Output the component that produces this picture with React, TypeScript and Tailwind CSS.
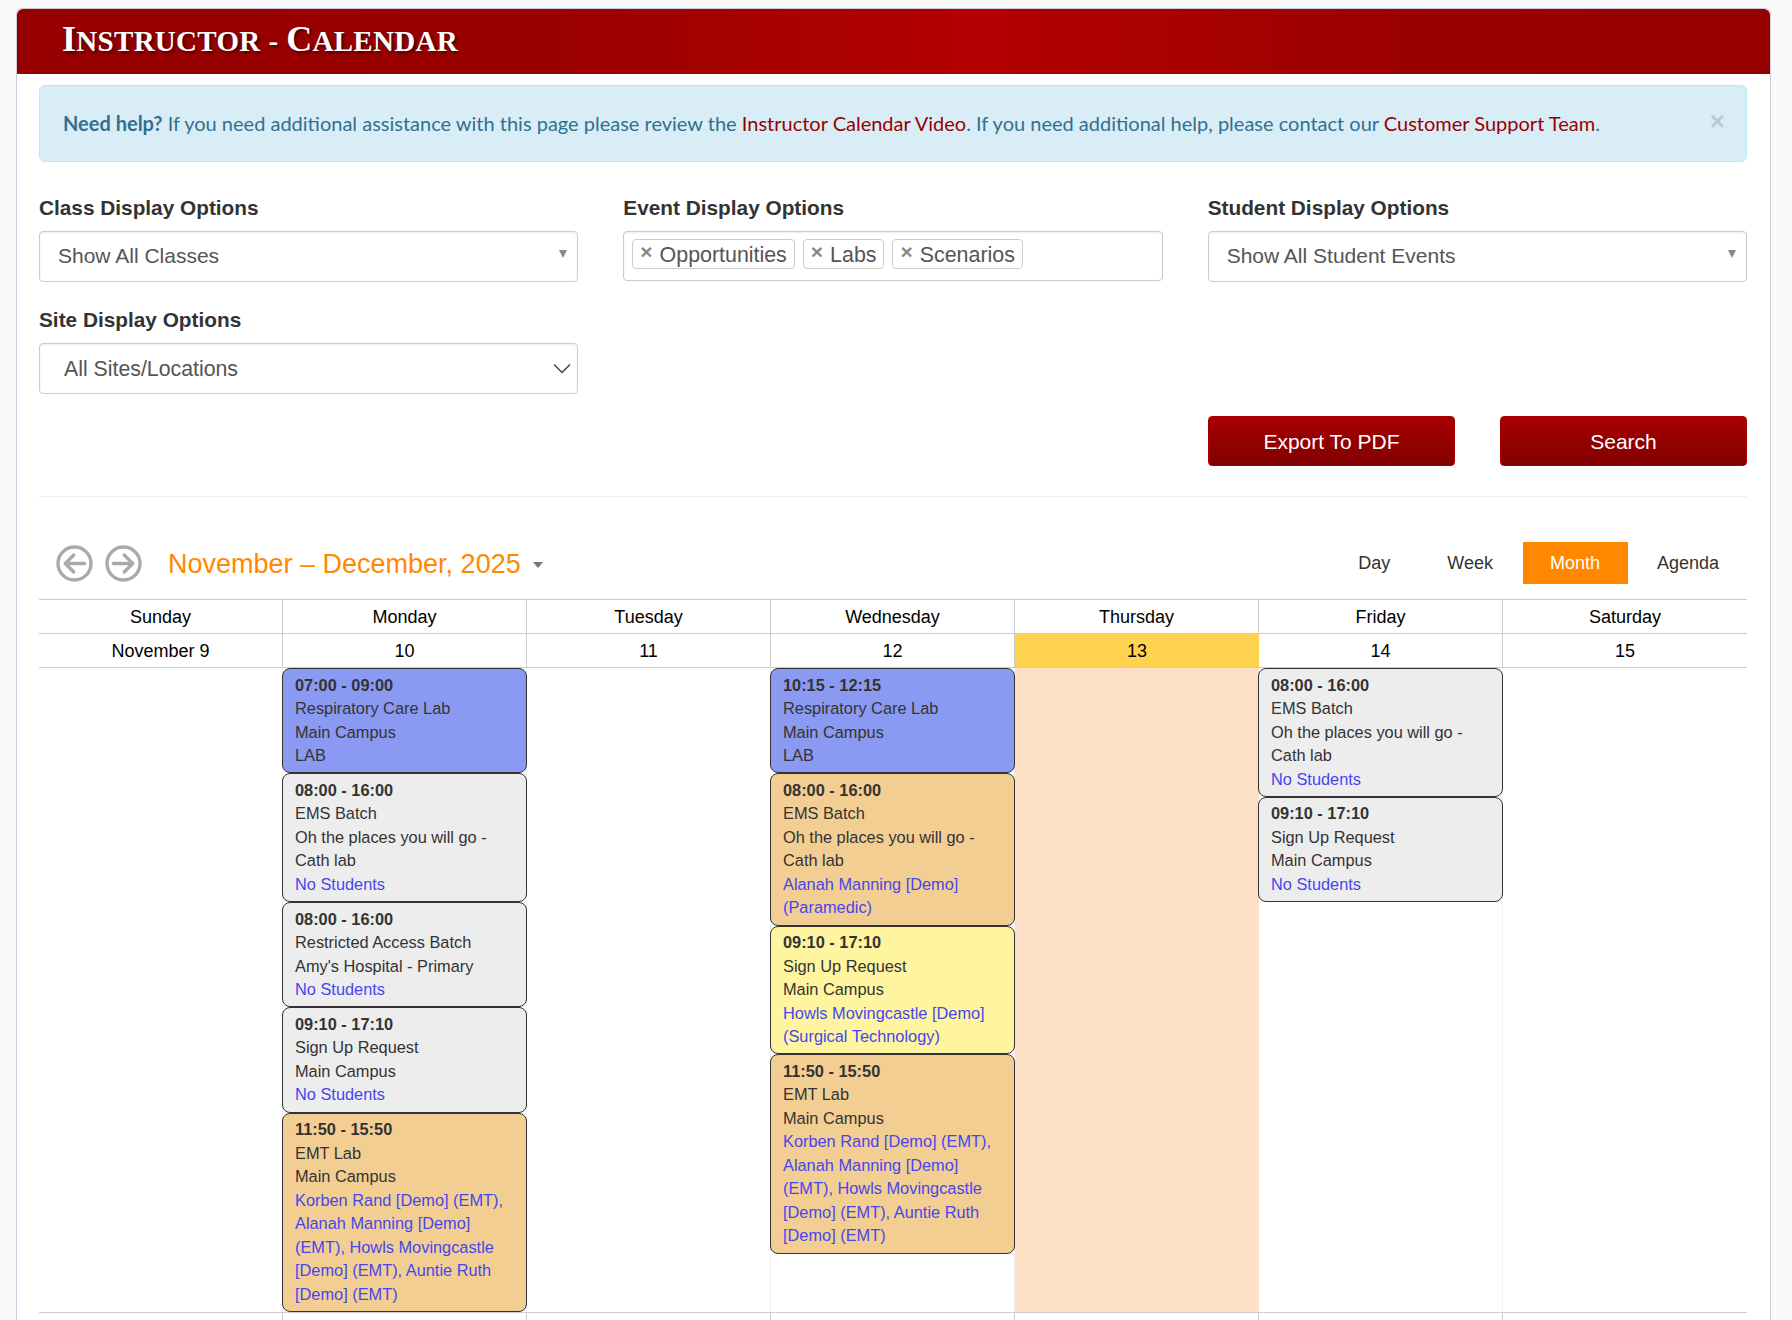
import React from "react";

const sans = "font-['Liberation_Sans',Arial,sans-serif]";

type Ev = { time: string; lines: string[]; link?: string[]; color: string };

const grey = "bg-[#ededed]";
const blue = "bg-[#8a9af2]";
const orange = "bg-[#f3ce92]";
const yellow = "bg-[#fff5a0]";

const rc = (c: string): Ev => ({ time: "07:00 - 09:00", lines: ["Respiratory Care Lab", "Main Campus", "LAB"], color: c });
const emt: Ev = {
  time: "11:50 - 15:50",
  lines: ["EMT Lab", "Main Campus"],
  link: ["Korben Rand [Demo] (EMT),", "Alanah Manning [Demo]", "(EMT), Howls Movingcastle", "[Demo] (EMT), Auntie Ruth", "[Demo] (EMT)"],
  color: orange,
};
const ems: Ev = { time: "08:00 - 16:00", lines: ["EMS Batch", "Oh the places you will go -", "Cath lab"], link: ["No Students"], color: grey };
const signup: Ev = { time: "09:10 - 17:10", lines: ["Sign Up Request", "Main Campus"], link: ["No Students"], color: grey };

const monday: Ev[] = [
  rc(blue),
  ems,
  { time: "08:00 - 16:00", lines: ["Restricted Access Batch", "Amy's Hospital - Primary"], link: ["No Students"], color: grey },
  signup,
  emt,
];
const wednesday: Ev[] = [
  { ...rc(blue), time: "10:15 - 12:15" },
  { ...ems, link: ["Alanah Manning [Demo]", "(Paramedic)"], color: orange },
  { ...signup, link: ["Howls Movingcastle [Demo]", "(Surgical Technology)"], color: yellow },
  emt,
];
const friday: Ev[] = [ems, signup];

const days = ["Sunday", "Monday", "Tuesday", "Wednesday", "Thursday", "Friday", "Saturday"];
const dates = ["November 9", "10", "11", "12", "13", "14", "15"];
const columns: Ev[][] = [[], monday, [], wednesday, [], friday, []];

function Event({ e }: { e: Ev }) {
  return (
    <div className={`-mx-px rounded-lg border border-[#333] pb-[4.8px] pl-[12px] pr-[8px] pt-[4.5px] text-[16.35px] leading-[23.5px] text-[#333] ${e.color}`}>
      <div className="font-bold">{e.time}</div>
      {e.lines.map((l) => (
        <div key={l}>{l}</div>
      ))}
      {e.link?.map((l) => (
        <div key={l} className="text-[#4646ee]">{l}</div>
      ))}
    </div>
  );
}

function Caret() {
  return (
    <svg width="10" height="10" viewBox="0 0 10 10" className="absolute right-[9px] top-[17px]">
      <path d="M1 1h8L5 9z" fill="#888" />
    </svg>
  );
}

function Tag({ t }: { t: string }) {
  return (
    <span className="flex h-[30px] items-center rounded-[4px] border border-[#ccc] bg-white pl-[7px] pr-[7px] text-[21.4px] text-[#555]">
      <span className="mr-[7px] -mt-[6px] text-[21px] font-bold leading-none text-[#888]">×</span>
      <span className="mt-[2px]">{t}</span>
    </span>
  );
}

function Arrow({ left }: { left?: boolean }) {
  return (
    <svg width="37" height="37" viewBox="0 0 24 24" fill="none" stroke="#aaa" strokeWidth="2.2" strokeLinecap="round" strokeLinejoin="round">
      <circle cx="12" cy="12" r="10.7" />
      {left ? <path d="M18.5 12H6M11.5 6.5 6 12l5.5 5.5" /> : <path d="M5.5 12H18M12.5 6.5 18 12l-5.5 5.5" />}
    </svg>
  );
}

function Title({ big, rest }: { big: string; rest: string }) {
  return (
    <>
      <span className="text-[36px]">{big}</span>
      <span className="text-[29px]">{rest}</span>
    </>
  );
}

export default function App() {
  return (
    <div className={`h-[1320px] overflow-hidden bg-[#fafafa] pl-[16px] pr-[21px] pt-2 ${sans}`}>
      <div className="h-[1400px] rounded-t-[6px] border-x border-t border-[#ccd] bg-white">
        <div className="flex h-[65px] items-center rounded-t-[6px] bg-[linear-gradient(to_right,#960000_0%,#9a0000_30%,#b40000_55%,#9a0000_80%,#960000_100%)] pl-[45px]">
          <h1 className="-mt-[6px] font-['Liberation_Serif',serif] font-bold leading-none tracking-[0.3px] text-white [word-spacing:3.5px] [text-shadow:2px_2px_3px_rgba(0,0,0,0.55)]">
            <Title big="I" rest="NSTRUCTOR" /> <span className="text-[29px]">-</span> <Title big="C" rest="ALENDAR" />
          </h1>
        </div>

        <div className="pl-[22px] pr-[23px]">
          <div className="relative mt-[11px] flex h-[77px] items-center rounded-[6px] border border-[#bce8f1] bg-[#d9edf7] pb-[2px] pl-[23px] font-['Lato',sans-serif] text-[20px] text-[#31708f]">
            <span>
              <b>Need help?</b> If you need additional assistance with this page please review the{" "}
              <span className="text-[#990000]">Instructor Calendar Video</span>. If you need additional help, please contact our{" "}
              <span className="text-[#990000]">Customer Support Team</span>.
            </span>
            <span className={`absolute right-[21px] top-[22px] text-[26px] font-bold leading-none text-[#b9ccd6] ${sans}`}>×</span>
          </div>

          <div className="mt-[33px] grid grid-cols-3 gap-x-[45px]">
            <div>
              <label className="block h-[26px] text-[20.8px] font-bold leading-[26px] text-[#333]">Class Display Options</label>
              <div className="relative mt-[10px] flex h-[51px] items-center rounded-[4px] border border-[#ccc] pb-[2px] pl-[18px] text-[21px] text-[#555] shadow-[inset_0_1px_2px_rgba(0,0,0,0.08)]">
                Show All Classes
                <Caret />
              </div>
            </div>
            <div>
              <label className="block h-[26px] text-[20.8px] font-bold leading-[26px] text-[#333]">Event Display Options</label>
              <div className="mt-[10px] flex h-[50px] items-start gap-2 rounded-[4px] border border-[#ccc] pl-2 pt-[7px] shadow-[inset_0_1px_2px_rgba(0,0,0,0.08)]">
                <Tag t="Opportunities" />
                <Tag t="Labs" />
                <Tag t="Scenarios" />
              </div>
            </div>
            <div>
              <label className="block h-[26px] text-[20.8px] font-bold leading-[26px] text-[#333]">Student Display Options</label>
              <div className="relative mt-[10px] flex h-[51px] items-center rounded-[4px] border border-[#ccc] pb-[2px] pl-[18px] text-[21px] text-[#555] shadow-[inset_0_1px_2px_rgba(0,0,0,0.08)]">
                Show All Student Events
                <Caret />
              </div>
            </div>
            <div className="mt-[25px]">
              <label className="block h-[26px] text-[20.8px] font-bold leading-[26px] text-[#333]">Site Display Options</label>
              <div className="relative mt-[10px] flex h-[51px] items-center rounded-[4px] border border-[#ccc] pl-[24px] pt-[2px] text-[21.3px] text-[#555] shadow-[inset_0_1px_2px_rgba(0,0,0,0.08)]">
                All Sites/Locations
                <svg width="18" height="11" viewBox="0 0 18 11" fill="none" stroke="#444" strokeWidth="1.5" className="absolute right-[6px] top-[19px]">
                  <path d="M1 1.5 9 9.5 17 1.5" />
                </svg>
              </div>
            </div>
          </div>

          <div className="mt-[22px] flex justify-end gap-[45px]">
            {["Export To PDF", "Search"].map((b) => (
              <button
                key={b}
                className="h-[50px] w-[247px] rounded-[4px] border border-[#a80000] bg-[linear-gradient(to_bottom,#a80000,#820000)] pt-px text-[21px] text-white"
              >
                {b}
              </button>
            ))}
          </div>

          <div className="mt-[30px] h-px bg-[#eee]" />

          <div className="mt-[45px] flex h-[42px] items-center">
            <div className="ml-[17px] flex gap-[12px]">
              <Arrow left />
              <Arrow />
            </div>
            <div className="ml-[26px] mt-[2px] text-[27px] leading-none text-[#ff8800]">November – December, 2025</div>
            <svg width="10" height="6" viewBox="0 0 10 6" className="ml-[12px] mt-[3px]">
              <path d="M0 0h10L5 6z" fill="#777" />
            </svg>
            <div className="ml-auto flex h-full gap-[2px] text-[18px] text-[#333]">
              {["Day", "Week", "Month", "Agenda"].map((v) => (
                <div key={v} className={`flex items-center pl-[27px] pr-[28px] ${v === "Month" ? "bg-[#ff8800] text-white" : ""}`}>
                  {v}
                </div>
              ))}
            </div>
          </div>

          <div className="mt-[15px] w-[1708px] border-t border-[#ccc]">
            <div className="grid grid-cols-7 border-b border-[#ccc] text-[18px] leading-[35px] text-black">
              {days.map((d, i) => (
                <div key={d} className={`h-[33px] text-center ${i < 6 ? "border-r border-[#ccc]" : ""}`}>{d}</div>
              ))}
            </div>
            <div className="grid grid-cols-7 border-b border-[#ccc] text-[18px] leading-[35px] text-black">
              {dates.map((d, i) => (
                <div key={d} className={`h-[33px] text-center ${i < 6 && i !== 4 ? "border-r border-[#ccc]" : ""} ${i === 4 ? "bg-[#ffd350]" : ""}`}>{d}</div>
              ))}
            </div>
            <div className="grid grid-cols-7 border-b border-[#ccc]">
              {columns.map((c, i) => (
                <div key={i} className={`${i < 6 && i !== 4 ? "border-r border-[#f0f0f0]" : ""} ${i === 4 ? "bg-[#fde0c6]" : ""}`}>
                  {c.map((e) => (
                    <Event key={e.time + e.lines[0]} e={e} />
                  ))}
                </div>
              ))}
            </div>
            <div className="grid h-[40px] grid-cols-7">
              {days.map((d, i) => (
                <div key={d} className={i < 6 ? "border-r border-[#ccc]" : ""} />
              ))}
            </div>
          </div>
        </div>
      </div>
    </div>
  );
}
